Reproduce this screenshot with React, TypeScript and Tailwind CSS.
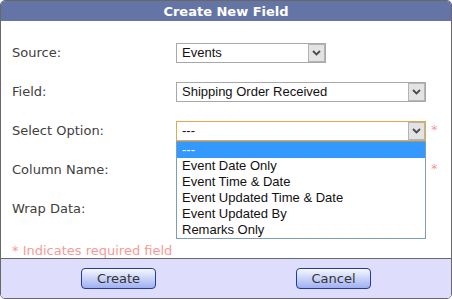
/* Create New Field dialog — dropdown open on Select Option */

const verdana = "font-['Verdana','DejaVu_Sans',sans-serif]"
const arial = "font-['Arial','Liberation_Sans',sans-serif]"

const options = [
  'Event Date Only',
  'Event Time & Date',
  'Event Updated Time & Date',
  'Event Updated By',
  'Remarks Only',
]

function Chevron() {
  return (
    <svg width="9" height="6" viewBox="0 0 9 6" className="block">
      <path d="M1 1 L4.5 4.5 L8 1" fill="none" stroke="#4a4a4a" strokeWidth="1.8" />
    </svg>
  )
}

function FakeSelect({ value, width, focused }: { value: string; width: string; focused?: boolean }) {
  return (
    <div
      className={`${width} h-[20px] flex items-stretch bg-white border ${
        focused ? 'border-[#e2a94f]' : 'border-[#a8a8a8]'
      }`}
    >
      <span className={`flex-1 pl-[5px] text-[13px] leading-[18px] text-[#111] ${arial}`}>{value}</span>
      <span className="w-[17px] flex items-center justify-center bg-[#e3e3e3] border border-[#b4b4b4]">
        <Chevron />
      </span>
    </div>
  )
}

function Row({ label, children }: { label: string; children?: React.ReactNode }) {
  return (
    <div className="h-[20px] flex items-center">
      <label className="w-[175px] shrink-0 pl-[11px] text-[13px] text-[#404040]">{label}</label>
      {children}
    </div>
  )
}

const Required = () => <span className="ml-[5px] text-[13px] text-[#f59a9a] self-start leading-[18px]">*</span>

export default function App() {
  return (
    <div className={`w-[452px] h-[299px] bg-white ${verdana}`}>
      <div className="h-full flex flex-col border border-[#686868] rounded-[5px] overflow-hidden">
        {/* 标题栏 */}
        <div className="h-[20px] shrink-0 bg-[#6475a5] flex items-center justify-center">
          <h1 className="text-[13px] font-bold text-white leading-none">Create New Field</h1>
        </div>

        {/* 表单 */}
        <div className="flex-1 pt-[22px] flex flex-col gap-[19px] relative">
          <Row label="Source:">
            <FakeSelect value="Events" width="w-[150px]" />
          </Row>
          <Row label="Field:">
            <FakeSelect value="Shipping Order Received" width="w-[250px]" />
          </Row>
          <Row label="Select Option:">
            <div className="relative flex items-center">
              <FakeSelect value="---" width="w-[250px]" focused />
              <Required />
              {/* 下拉列表 */}
              <ul
                className={`absolute left-0 top-[20px] w-[250px] bg-white border border-[#7f9db9] z-10 ${arial} text-[13px] text-[#111]`}
              >
                <li className="h-[16px] leading-[16px] pl-[5px] bg-[#3399ff] text-white">---</li>
                {options.map((o) => (
                  <li key={o} className="h-[16px] leading-[16px] pl-[5px]">
                    {o}
                  </li>
                ))}
              </ul>
            </div>
          </Row>
          <Row label="Column Name:">
            <div className="flex items-center">
              <input className="w-[250px] h-[20px] border border-[#a8a8a8]" />
              <Required />
            </div>
          </Row>
          <Row label="Wrap Data:">
            <input type="checkbox" />
          </Row>
          <p className="mt-auto pl-[11px] text-[13px] leading-[15px] text-[#f79a9a]">* Indicates required field</p>
        </div>

        {/* 按钮 */}
        <div className="h-[40px] shrink-0 border-t border-[#686868] bg-[#dedefc] flex items-center justify-center gap-[140px]">
          {['Create', 'Cancel'].map((b) => (
            <button
              key={b}
              className="w-[75px] h-[21px] rounded-[4px] border border-[#243c96] bg-gradient-to-b from-[#f6f7ff] to-[#9fb0f0] text-[13px] leading-none text-[#333]"
            >
              {b}
            </button>
          ))}
        </div>
      </div>
    </div>
  )
}
